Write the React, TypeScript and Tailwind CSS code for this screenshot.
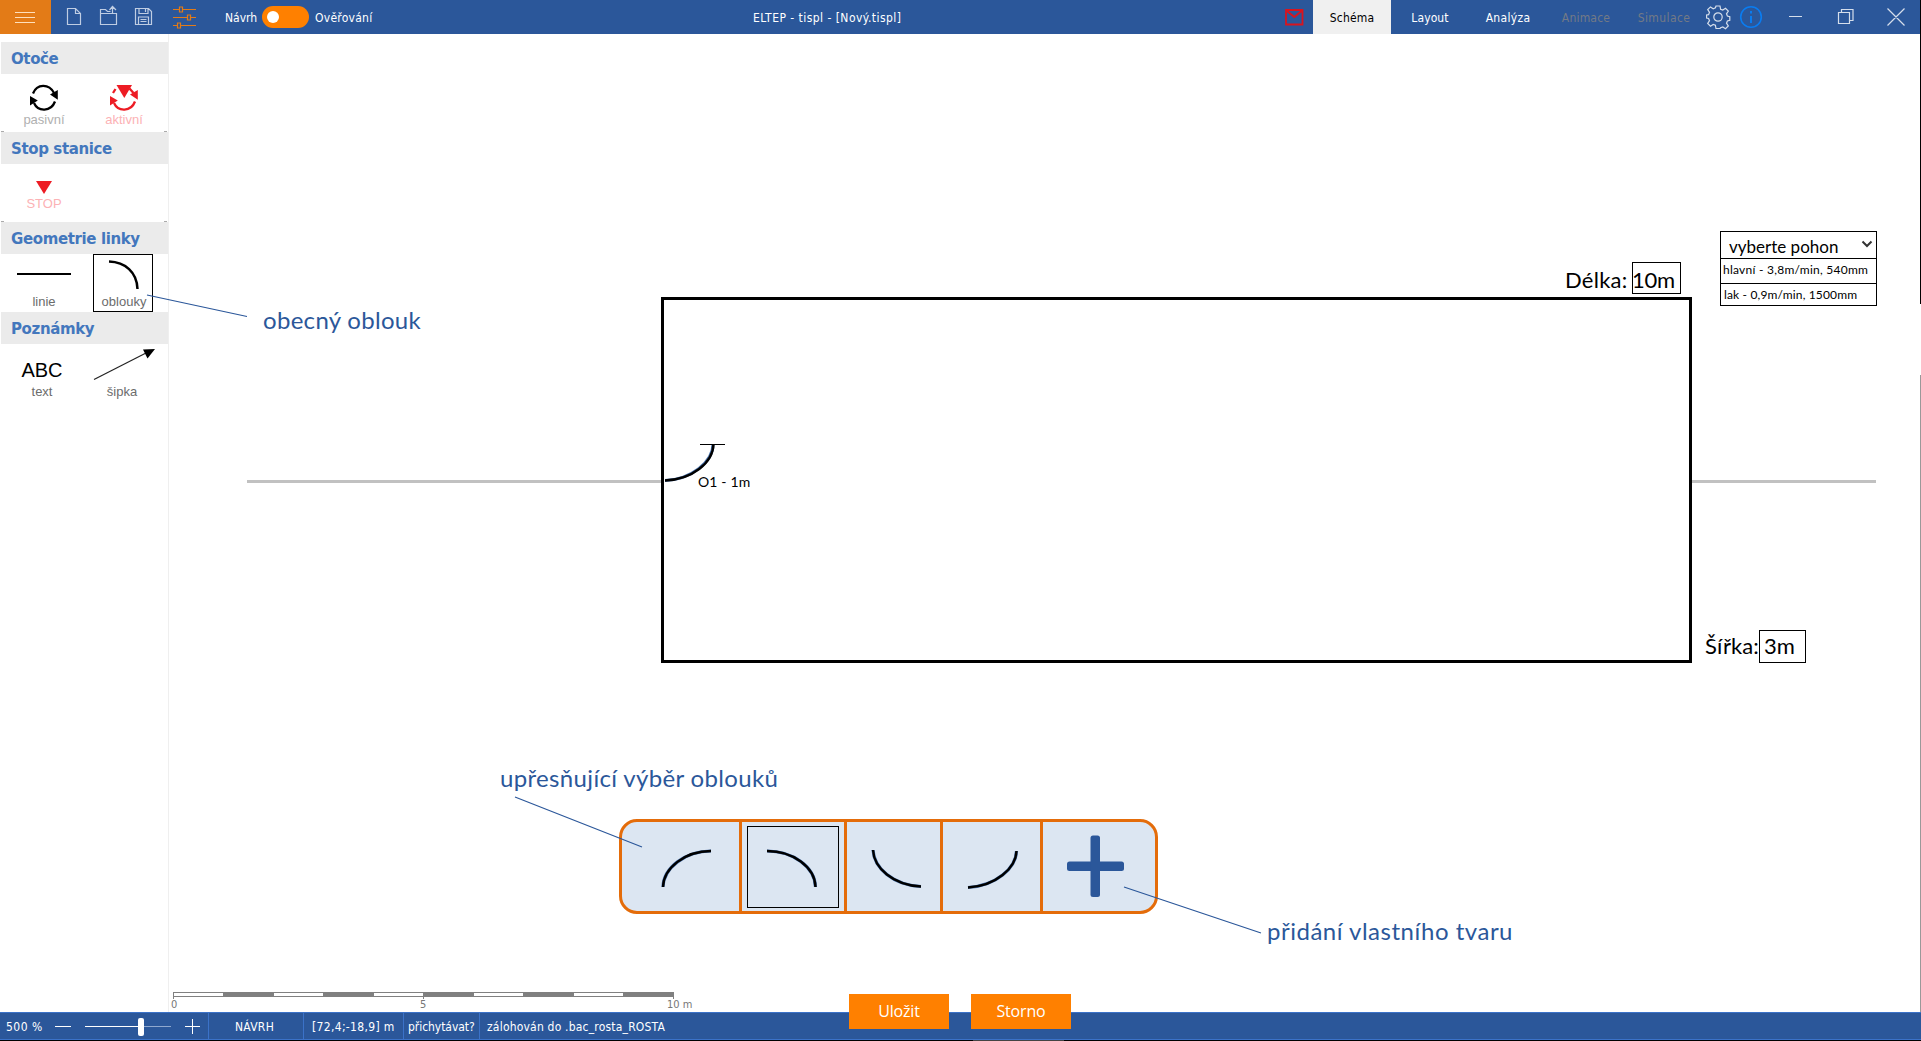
import React from "react";

const tahoma = "font-['DejaVu_Sans_Condensed','DejaVu_Sans',sans-serif] [font-stretch:condensed]";
const calibri = "font-[Lato,sans-serif]";
const arial = "font-['Liberation_Sans',sans-serif]";

function Text({ className, children }: { className: string; children: React.ReactNode }) {
  return <span className={`absolute whitespace-nowrap leading-none ${className}`}>{children}</span>;
}

function Tab({ className, children }: { className: string; children: React.ReactNode }) {
  return <span className={`flex h-full w-[78px] shrink-0 items-center justify-center pt-[2px] ${className}`}>{children}</span>;
}

function Header() {
  return (
    <header className={`flex h-[34px] shrink-0 items-center bg-[#2b579a] text-[12px] text-white ${tahoma}`}>
      <button className="flex h-full w-[51px] shrink-0 flex-col items-center justify-center gap-1 bg-[#e37b17] pr-[1px]">
        <span className="h-px w-5 bg-[#ffe0bd]" />
        <span className="h-px w-5 bg-[#ffe0bd]" />
        <span className="h-px w-5 bg-[#ffe0bd]" />
      </button>
      <svg width="150" height="34" fill="none" stroke="#bfcde3" strokeWidth="1.2" className="shrink-0">
        <path d="M16.500 8.500h8l5 5v11h-13zM24.500 8.500v5h5" />
        <path d="M49.500 13.500h16v11h-16zM49.500 13V9.500h5l2 2h3M61.500 14V7M58.500 10l3-3.500 3.500 3.500" />
        <path d="M84.500 8.500h13l3 3v13h-16zM88 8.500v5h9v-5M94.500 9v3M87.500 24v-7h10v7M89.500 19.500h6M89.500 21.500h6" />
        <g stroke="#e37b17">
          <path d="M122 9.500h6m4 0h13M122 17.500h14m4 0h5M122 25.500h4m4 0h15" />
          <path d="M128.500 7h3v5h-3zM136.500 15h3v5h-3zM126.500 23h3v5h-3z" />
        </g>
      </svg>
      <span className="ml-6 w-[37px] shrink-0 pt-[2px]">Návrh</span>
      <span className="flex h-[22px] w-[47px] shrink-0 items-center rounded-full bg-[#ff8000] pl-[5px]">
        <span className="size-3 rounded-full bg-white" />
      </span>
      <span className="ml-[6px] w-[438px] shrink-0 pt-[2px] tracking-[0.25px]">Ověřování</span>
      <span className="w-[531px] shrink-0 pt-[2px] tracking-[0.46px]">ELTEP - tispl - [Nový.tispl]</span>
      <svg width="29" height="34" fill="none" stroke="#d9141e" strokeWidth="1.800" className="shrink-0">
        <path d="M2 10h16.500v14.500H2zM3 11l7.300 6 7.300-6" />
      </svg>
      <Tab className="bg-[#f0f0f0] tracking-[0.2px] text-black">Schéma</Tab>
      <Tab className="tracking-[0.1px]">Layout</Tab>
      <Tab className="tracking-[0.3px]">Analýza</Tab>
      <Tab className="tracking-[0.2px] text-[#737a86]">Animace</Tab>
      <Tab className="tracking-[0.4px] text-[#737a86]">Simulace</Tab>
      <svg width="217" height="34" fill="none" stroke="#d5deeb" strokeWidth="1.2" className="shrink-0">
        <g transform="translate(3 5)">
          <path d="M10 1h4l.6 3.200 2.200.9 2.700-1.800 2.800 2.800-1.800 2.700.9 2.200 2.400.6v3.800l-2.400.6-.9 2.200 1.800 2.700-2.800 2.800-2.700-1.800-2.200.9L14 23.500h-4l-.6-3.200-2.200-.9-2.700 1.800L1.700 18.400l1.800-2.700-.9-2.200-2-.4V10l2-.4.9-2.200L1.700 4.700l2.800-2.800 2.700 1.800 2.200-.9z" />
          <circle cx="12" cy="12" r="4.200" />
        </g>
        <circle cx="48" cy="17" r="10.300" stroke="#0a7cf0" strokeWidth="1.600" />
        <path d="M48 11v2.500M48 16v7" stroke="#0a7cf0" strokeWidth="2" />
        <path d="M86 16.500h13M135.500 12.500h11v11h-11zM138.500 12.500v-3h11.500v11h-3.500M184.500 8.500l17 17M201.500 8.500l-17 17" />
      </svg>
    </header>
  );
}

function Heading({ children }: { children: React.ReactNode }) {
  return (
    <h2 className="ml-px flex h-8 items-center bg-[#ebebeb] pl-[10px] pt-[2px] font-['DejaVu_Sans',sans-serif] text-[15px] font-bold tracking-[-0.38px] text-[#4377bd]">
      {children}
    </h2>
  );
}

function Cycle({ color, active }: { color: string; active?: boolean }) {
  return (
    <svg width="30" height="28" viewBox="0 0 30 28" className="block">
      <g fill="none" stroke={color} strokeWidth="2.300">
        {active ? <path d="M4 9l2.500-4M20.500 4.500l4 4.500" /> : <path d="M4 9.500C8 -.5 20 -.5 25 9" />}
        <path d="M26 17.500C22 28 9 28 5 19" />
      </g>
      <path d="M28.800 6v9.800l-7.800-5.200zM1 12v9.500l7.800-5z" fill={color} />
      {active && <path d="M7.500 1h15.500l-7.700 13z" fill={color} />}
    </svg>
  );
}

function Item({ label, className, children }: { label: string; className: string; children: React.ReactNode }) {
  return (
    <div className={`flex flex-col items-center justify-between leading-none ${className}`}>
      {children}
      <span>{label}</span>
    </div>
  );
}

function SectionTicks() {
  return (
    <div className="mt-auto flex h-px justify-between pl-px pr-[1px]">
      <span className="h-px w-[3px] bg-[#aaa]" />
      <span className="h-px w-[3px] bg-[#aaa]" />
    </div>
  );
}

function Sidebar() {
  return (
    <aside className={`w-[169px] shrink-0 border-r border-[#efefef] pt-2 text-[13px] text-[#6c6c6c] ${arial}`}>
      <Heading>Otoče</Heading>
      <div className="flex h-[58px] flex-col pt-[10px]">
        <div className="flex">
          <Item label="pasivní" className="h-[42px] w-[88px] text-[#b0b0b0]"><Cycle color="#000" /></Item>
          <Item label="aktivní" className="h-[42px] w-[72px] text-[#fcb2b5]"><Cycle color="#ed1c24" active /></Item>
        </div>
        <SectionTicks />
      </div>
      <Heading>Stop stanice</Heading>
      <div className="flex h-[58px] flex-col pt-[17px]">
        <Item label="STOP" className="h-[29px] w-[88px] text-[#fcb2b5]">
          <svg width="16" height="13"><path d="M0 0h16l-8 13z" fill="#ed1c24" /></svg>
        </Item>
        <SectionTicks />
      </div>
      <Heading>Geometrie linky</Heading>
      <div className="flex h-[58px]">
        <Item label="linie" className="h-[54px] w-[88px] pt-[19px]">
          <span className="h-[2px] w-[54px] bg-black" />
        </Item>
        <Item label="oblouky" className="ml-[5px] h-[58px] w-[60px] border border-black pb-[3px] pl-[2px] pt-[4px]">
          <svg width="34" height="34" fill="none" stroke="#000" strokeWidth="2.500"><path d="M2 2.500C18 3 30 13 30.500 30" /></svg>
        </Item>
      </div>
      <Heading>Poznámky</Heading>
      <div className="flex h-[58px]">
        <Item label="text" className="h-[54px] w-[84px] pt-[16px]">
          <span className="text-[20px] text-black">ABC</span>
        </Item>
        <Item label="šipka" className="h-[54px] w-[76px] pt-[4px]">
          <svg width="66" height="34">
            <path d="M5 31.500L57 5" stroke="#222" strokeWidth="1.200" />
            <path d="M66 1l-7.500 9.500-4.500-9z" />
          </svg>
        </Item>
      </div>
    </aside>
  );
}

function Plan() {
  return (
    <>
      <div className="absolute left-[247px] top-[480px] h-[3px] w-[1629px] bg-[#c1c1c1]" />
      <div className="absolute left-[661px] top-[297px] h-[366px] w-[1031px] border-[3px] border-black bg-white" />
      <svg className="absolute left-[660px] top-[440px]" width="70" height="50" fill="none">
        <path d="M5 40.500C31 39.500 53 22 53 4" stroke="#4a73ad" strokeWidth="3" />
        <path d="M5 40.500C32 39.500 53 23 53.500 4" stroke="#000" strokeWidth="2.400" />
        <path d="M40 4.500h25" stroke="#000" />
      </svg>
      <Text className={`left-[698px] top-[475px] text-[14px] tracking-[0.15px] ${calibri}`}>O1 - 1m</Text>
      <Text className={`left-[1565px] top-[269px] text-[22px] tracking-[0.25px] ${calibri}`}>Délka:</Text>
      <div className="absolute left-[1632px] top-[262px] h-[32px] w-[49px] border border-black" />
      <Text className={`left-[1632px] top-[269px] text-[22px] tracking-[-0.3px] ${calibri}`}>10m</Text>
      <Text className={`left-[1705px] top-[635px] text-[22px] tracking-[0.1px] ${calibri}`}>Šířka:</Text>
      <div className="absolute left-[1759px] top-[630px] h-[33px] w-[47px] border border-black" />
      <Text className={`left-[1764px] top-[635px] text-[22px] ${calibri}`}>3m</Text>
    </>
  );
}

function DriveSelect() {
  return (
    <div className={`absolute left-[1720px] top-[231px] w-[157px] divide-y divide-black border border-black leading-none ${calibri}`}>
      <div className="flex h-[27px] items-center justify-between pl-2 pr-[3px] pt-[2px] text-[17px]">
        vyberte pohon
        <svg width="12" height="8" fill="none" stroke="#333" strokeWidth="2" className="mb-1"><path d="M1.500 1.500L6 6l4.500-4.500" /></svg>
      </div>
      <div className="flex h-[25px] items-center pb-[2px] pl-[2px] text-[12px] tracking-[0.25px]">hlavní - 3,8m/min, 540mm</div>
      <div className="flex h-[21px] items-center pl-[3px] text-[12px] tracking-[0.15px]">lak - 0,9m/min, 1500mm</div>
    </div>
  );
}

function ArcCell({ d, className, selected }: { d: string; className: string; selected?: boolean }) {
  return (
    <div className={`relative h-full shrink-0 border-r-[3px] border-[#e46c0a] ${className}`}>
      {selected && <div className="absolute left-[5px] top-[4px] h-[82px] w-[92px] border border-black" />}
      <svg width="100%" height="89" fill="none">
        <path d={d} stroke="#4a73ad" strokeWidth="3.200" />
        <path d={d} stroke="#000" strokeWidth="2.400" />
      </svg>
    </div>
  );
}

function ArcPalette() {
  return (
    <div className="absolute left-[619px] top-[819px] flex h-[95px] w-[539px] rounded-[18px] border-[3px] border-[#e46c0a] bg-[#dce6f2]">
      <ArcCell className="w-[120px]" d="M41 65C41.500 46 63 29 89 29" />
      <ArcCell className="w-[105px]" d="M25 29C51 29 73 45 73.500 65" selected />
      <ArcCell className="w-[96px]" d="M26 28C27 46 46 63 74 64.500" />
      <ArcCell className="w-[100px]" d="M25 65.500C53 64 73 46 73.500 29" />
      <svg width="112" height="89" fill="#2b579a">
        <rect x="24" y="39.500" width="57" height="9.500" rx="2.500" />
        <rect x="47.500" y="13.500" width="9.500" height="61.500" rx="2.500" />
      </svg>
    </div>
  );
}

function Notes() {
  return (
    <>
      <svg className="pointer-events-none absolute left-0 top-0" width="1921" height="1012" stroke="#2b579a" strokeWidth="1.200">
        <path d="M147 295L247 316.500M515 797L642 847M1124 887L1261 933" />
      </svg>
      <Text className={`left-[263px] top-[308px] text-[24px] tracking-[0.3px] text-[#2b579a] ${calibri}`}>obecný oblouk</Text>
      <Text className={`left-[500px] top-[766px] text-[24px] tracking-[0.34px] text-[#2b579a] ${calibri}`}>upřesňující výběr oblouků</Text>
      <Text className={`left-[1267px] top-[919px] text-[24px] tracking-[0.5px] text-[#2b579a] ${calibri}`}>přidání vlastního tvaru</Text>
    </>
  );
}

function Ruler() {
  return (
    <div className={`absolute left-[173px] top-[992px] w-[520px] text-[11px] leading-none text-[#777] ${tahoma}`}>
      <svg width="502" height="7" className="block">
        <path d="M0 0h501v5H0zM0 5h1v2H0zM250 5h1v2h-1zM500 5h1v2h-1z" fill="#808080" />
        <path d="M1 1h49v3H1zM101 1h49v3h-49zM201 1h49v3h-49zM301 1h49v3h-49zM401 1h49v3h-49z" fill="#fff" />
      </svg>
      <div className="flex">
        <span className="w-[247px] -translate-x-[2px]">0</span>
        <span className="w-[247px]">5</span>
        <span className="whitespace-nowrap">10 m</span>
      </div>
    </div>
  );
}

function StatusBar() {
  return (
    <footer className={`flex h-[28px] shrink-0 items-center border-y border-[#3b72c8] bg-[#2b579a] text-[12px] text-white ${tahoma}`}>
      <span className="w-[55px] pl-[6px] pt-[2px] tracking-[0.5px]">500 %</span>
      <svg width="153" height="26" stroke="#fff" fill="none">
        <path d="M0 13.500h16M30 13.500h54M130 13.500h15M137.500 6v15" />
        <path d="M84 13.500h32" stroke="#8fa8cf" />
        <rect x="83" y="5" width="6" height="18" rx="2" fill="#fff" stroke="none" />
      </svg>
      <span className="flex h-full w-[95px] items-center justify-center border-l border-[#3b72c8] pr-[3px] pt-[2px] tracking-[0.3px]">NÁVRH</span>
      <span className="flex h-full w-[100px] items-center whitespace-nowrap border-l border-[#3b72c8] pl-2 pt-[2px] tracking-[0.33px]">[72,4;-18,9] m</span>
      <span className="flex h-full w-[76px] items-center border-l border-[#3b72c8] pl-1 pt-[2px] tracking-[-0.05px]">přichytávat?</span>
      <span className="flex h-full items-center border-l border-[#3b72c8] pl-[7px] pt-[2px] tracking-[0.2px]">zálohován do .bac_rosta_ROSTA</span>
    </footer>
  );
}

export default function App() {
  return (
    <div className="relative flex h-[1041px] w-[1921px] flex-col overflow-hidden bg-white text-black">
      <Header />
      <main className="flex min-h-0 flex-1">
        <Sidebar />
      </main>
      <StatusBar />
      <div className="h-px shrink-0 bg-black"><div className="ml-[973px] h-px w-[91px] bg-[#444]" /></div>
      <Plan />
      <DriveSelect />
      <ArcPalette />
      <Notes />
      <Ruler />
      <div className="absolute left-[849px] top-[994px] flex gap-[22px] font-['Open_Sans',sans-serif] text-[16px] tracking-[-0.2px] text-white">
        <button className="h-[35px] w-[100px] bg-[#ff8000] pb-[2px]">Uložit</button>
        <button className="h-[35px] w-[100px] bg-[#ff8000] pb-[2px]">Storno</button>
      </div>
      <div className="absolute right-0 top-0 h-[304px] w-px bg-black" />
      <div className="absolute right-0 top-[375px] h-[637px] w-px bg-[#999]" />
    </div>
  );
}
